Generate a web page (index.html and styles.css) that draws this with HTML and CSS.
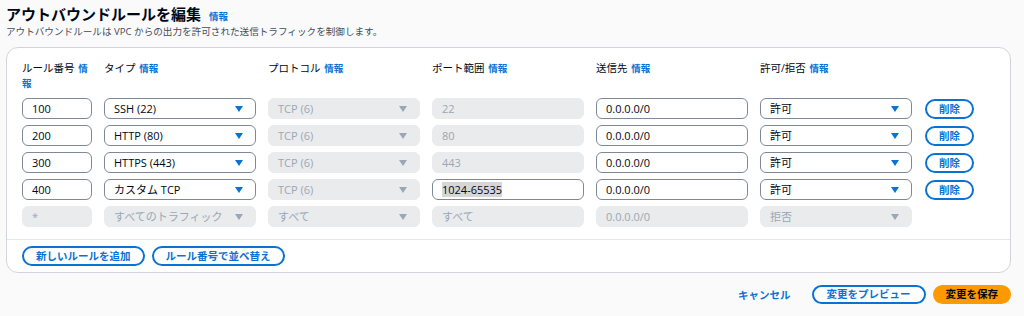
FILE: index.html
```html
<!DOCTYPE html>
<html lang="ja">
  <head>
    <meta charset="UTF-8" />
    <title>アウトバウンドルールを編集</title>
    <link rel="stylesheet" href="styles.css">
  </head>
  <body>
    <div class="page">
      <h1 class="title">アウトバウンドルールを編集 <a class="info" href="#">情報</a></h1>
      <p class="subtitle">アウトバウンドルールは VPC からの出力を許可された送信トラフィックを制御します。</p>

      <div class="card">
        <div class="card-body">
          <div class="row head">
            <div class="col c-num">ルール番号 <a class="info" href="#">情報</a></div>
            <div class="col c-wide">タイプ <a class="info" href="#">情報</a></div>
            <div class="col c-wide">プロトコル <a class="info" href="#">情報</a></div>
            <div class="col c-wide">ポート範囲 <a class="info" href="#">情報</a></div>
            <div class="col c-wide">送信先 <a class="info" href="#">情報</a></div>
            <div class="col c-wide">許可/拒否 <a class="info" href="#">情報</a></div>
          </div>

          <div class="row">
            <div class="field c-num">100</div>
            <div class="field select c-wide">SSH (22)</div>
            <div class="field select disabled c-wide">TCP (6)</div>
            <div class="field disabled c-wide">22</div>
            <div class="field c-wide">0.0.0.0/0</div>
            <div class="field select c-wide">許可</div>
            <button class="btn">削除</button>
          </div>
          <div class="row">
            <div class="field c-num">200</div>
            <div class="field select c-wide">HTTP (80)</div>
            <div class="field select disabled c-wide">TCP (6)</div>
            <div class="field disabled c-wide">80</div>
            <div class="field c-wide">0.0.0.0/0</div>
            <div class="field select c-wide">許可</div>
            <button class="btn">削除</button>
          </div>
          <div class="row">
            <div class="field c-num">300</div>
            <div class="field select c-wide">HTTPS (443)</div>
            <div class="field select disabled c-wide">TCP (6)</div>
            <div class="field disabled c-wide">443</div>
            <div class="field c-wide">0.0.0.0/0</div>
            <div class="field select c-wide">許可</div>
            <button class="btn">削除</button>
          </div>
          <div class="row">
            <div class="field c-num">400</div>
            <div class="field select c-wide">カスタム TCP</div>
            <div class="field select disabled c-wide">TCP (6)</div>
            <div class="field c-wide"><span class="selected">1024-65535</span></div>
            <div class="field c-wide">0.0.0.0/0</div>
            <div class="field select c-wide">許可</div>
            <button class="btn">削除</button>
          </div>
          <div class="row">
            <div class="field disabled c-num">*</div>
            <div class="field select disabled c-wide">すべてのトラフィック</div>
            <div class="field select disabled c-wide">すべて</div>
            <div class="field disabled c-wide">すべて</div>
            <div class="field disabled c-wide">0.0.0.0/0</div>
            <div class="field select disabled c-wide">拒否</div>
          </div>
        </div>
        <div class="card-footer">
          <button class="btn">新しいルールを追加</button>
          <button class="btn">ルール番号で並べ替え</button>
        </div>
      </div>

      <div class="actions">
        <a class="link-btn" href="#">キャンセル</a>
        <button class="btn">変更をプレビュー</button>
        <button class="btn primary">変更を保存</button>
      </div>
    </div>
  </body>
</html>
```

FILE: styles.css
```css
body {
  font-family: "Open Sans", "Noto Sans CJK JP", sans-serif;
  background-color: #fafafa;
  color: #000716;
  margin: 0;
}
.page {
  padding: 5px 13px 0 6px;
}
.title {
  font-size: 15px;
  line-height: 18px;
  height: 18px;
  font-weight: 700;
  margin: 0;
}
.subtitle {
  font-size: 9.6px;
  line-height: 14px;
  height: 14px;
  color: #414d5c;
  margin: 2px 0 0;
}
.info {
  color: #0972d3;
  font-size: 9.5px;
  font-weight: 700;
  text-decoration: none;
  margin-left: 4px;
}
.col .info {
  margin-left: 1px;
}
.card {
  margin-top: 8px;
  background: white;
  border: 1px solid #d1d5db;
  border-radius: 12px;
}
.card-body {
  padding: 13px 15px 12px;
  border-bottom: 1px solid #e4e6e9;
}
.row {
  display: flex;
  gap: 12px;
  align-items: center;
  margin-bottom: 6px;
  height: 21px;
}
.row:last-child {
  margin-bottom: 0;
}
.row.head {
  align-items: flex-start;
  margin-bottom: 7px;
  height: 30px;
}
.col {
  font-size: 10.5px;
  line-height: 15px;
  color: #000716;
}
.c-num {
  width: 70px;
  flex: none;
}
.c-wide {
  width: 152px;
  flex: none;
}
.field {
  box-sizing: border-box;
  height: 21px;
  border: 1px solid #7d8998;
  border-radius: 6px;
  padding: 0 9px;
  font-size: 11px;
  line-height: 19px;
  position: relative;
  white-space: nowrap;
}
.field.disabled {
  background: #e9ebed;
  border-color: #e9ebed;
  color: #9ba7b6;
}
.field.select::after {
  content: "";
  position: absolute;
  right: 12px;
  top: 7px;
  border-left: 4px solid transparent;
  border-right: 4px solid transparent;
  border-top: 6px solid #0972d3;
}
.field.select.disabled::after {
  border-top-color: #9ba7b6;
}
.selected {
  background: #d6d6d6;
}
.btn {
  font-family: inherit;
  font-size: 10.5px;
  font-weight: 700;
  color: #0972d3;
  background: white;
  border: 2px solid #0972d3;
  border-radius: 20px;
  height: 20px;
  padding: 0 12px;
  line-height: 16px;
  cursor: pointer;
}
.row .btn {
  margin-left: 1px;
  width: 49px;
  padding: 0;
}
.card-footer {
  padding: 6px 15px 6px;
  display: flex;
  gap: 7px;
}
.actions {
  display: flex;
  justify-content: flex-end;
  align-items: center;
  gap: 7px;
  margin-top: 12px;
}
.actions .btn {
  height: 19px;
  line-height: 15px;
  padding: 0 13px;
}
.link-btn {
  color: #0972d3;
  font-size: 10.5px;
  font-weight: 700;
  text-decoration: none;
  margin-right: 14px;
}
.btn.primary {
  background: #ff9900;
  border-color: #ff9900;
  color: #000716;
  padding: 0 11px;
}
```
